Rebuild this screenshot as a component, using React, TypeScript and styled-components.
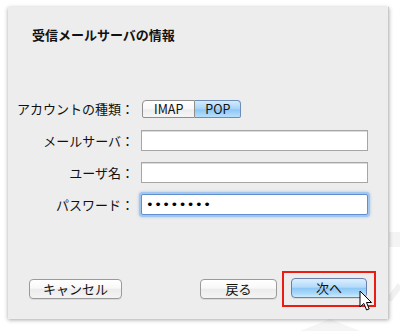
import React from 'react';
import styled, { createGlobalStyle } from 'styled-components';

const GlobalStyle = createGlobalStyle`
  html, body {
    margin: 0;
    padding: 0;
    background: #ffffff;
  }
  body {
    font-family: "Lucida Grande", "Noto Sans CJK JP", "Liberation Sans", sans-serif;
    color: #111;
    text-spacing-trim: space-all;
  }
`;

const Page = styled.div`
  position: relative;
  width: 400px;
  height: 331px;
  box-sizing: border-box;
  padding: 7px 11px 12px 8px;
  background: #ffffff;
  overflow: hidden;
`;

const Watermark = styled.svg`
  position: absolute;
  inset: 0;
  z-index: 0;
`;

const Panel = styled.div`
  position: relative;
  z-index: 1;
  height: 100%;
  display: flex;
  flex-direction: column;
  background: #ededed;
  border-right: 1px solid #c9c9c9;
  box-shadow: 0 1px 4px rgba(0, 0, 0, 0.35);
`;

const Title = styled.h1`
  margin: 19px 0 0 24px;
  font-size: 13px;
  line-height: 18px;
  font-weight: bold;
`;

const Form = styled.div`
  margin-top: 54px;
  display: grid;
  grid-template-columns: 126px 227px;
  grid-auto-rows: 21px;
  column-gap: 7px;
  row-gap: 11px;
  align-items: center;
`;

const Label = styled.label`
  text-align: right;
  font-size: 13px;
  line-height: 21px;
  white-space: nowrap;
  text-spacing-trim: space-all;
`;

const Segmented = styled.div`
  display: flex;
  height: 18px;
  margin-left: 1px;
  align-self: center;
`;

const Segment = styled.div<{ active?: boolean; first?: boolean }>`
  box-sizing: border-box;
  height: 18px;
  padding: 0 ${p => (p.first ? 11 : 10)}px;
  display: flex;
  align-items: center;
  font-size: 12.5px;
  color: #111;
  border: 1px solid ${p => (p.active ? '#6e8cb8' : '#8f8f8f')};
  border-left-width: ${p => (p.first ? 1 : 0)}px;
  border-radius: ${p => (p.first ? '4px 0 0 2px' : '0 4px 2px 0')};
  background: ${p =>
    p.active
      ? 'linear-gradient(#d3ebfd 0%, #a5d3f8 50%, #8cc6f5 55%, #b8e0fb 100%)'
      : 'linear-gradient(#ffffff 0%, #f8f8f8 50%, #ececec 55%, #f6f6f6 100%)'};
`;

const TextInput = styled.div<{ focused?: boolean }>`
  box-sizing: border-box;
  height: 21px;
  background: #fff;
  border: 1px solid ${p => (p.focused ? '#5f8fd0' : '#a6a6a6')};
  border-radius: ${p => (p.focused ? 2 : 0)}px;
  box-shadow: ${p => (p.focused ? '0 0 0 2px #a3c6ee, 0 0 3px 2px rgba(120, 165, 225, 0.6)' : 'inset 0 1px 0 #dcdcdc')};
  display: flex;
  align-items: center;
  padding-left: 4px;
`;

const Dots = styled.span`
  font-size: 13px;
  letter-spacing: 0.5px;
  font-family: "DejaVu Sans", sans-serif;
  line-height: 1;
  color: #000;
`;

const Footer = styled.div`
  margin-top: auto;
  display: flex;
  align-items: center;
  gap: 14px;
  padding: 0 21px 20px 21px;
`;

const Spacer = styled.div`
  flex: 1;
`;

const Highlight = styled.div`
  display: flex;
  margin: -9px -9px -9px -9px;
  padding: 5px 7px 7px 7px;
  border: 2px solid #ec1c12;
`;

const Button = styled.button<{ primary?: boolean; width: number }>`
  box-sizing: border-box;
  width: ${p => p.width}px;
  height: 20px;
  padding: 0;
  font-family: inherit;
  font-size: 13px;
  line-height: 18px;
  color: #111;
  border-radius: 4px;
  border: 1px solid ${p => (p.primary ? '#6a7fae' : '#9a9a9a')};
  background: ${p =>
    p.primary
      ? 'linear-gradient(#dcefff 0%, #b3dbfa 45%, #8ec8f6 52%, #a9d8fa 80%, #cdebfd 100%)'
      : 'linear-gradient(#ffffff 0%, #f8f8f8 45%, #ececec 52%, #f4f4f4 100%)'};
  box-shadow: 0 1px 0 rgba(0, 0, 0, 0.08);
`;

const Cursor = styled.svg`
  position: absolute;
  left: 359px;
  top: 290px;
  z-index: 2;
`;

export default function App() {
  return (
    <Page>
      <GlobalStyle />
      <Watermark width="400" height="331">
        <path d="M389 232 L400 232 L400 247 L389 247 Z" fill="#f4f4f4" />
        <path d="M389 300 L400 285" stroke="#f1f1f1" strokeWidth="6" />
        <path d="M300 331 L330 319 L360 331 Z" fill="#f5f5f5" />
      </Watermark>
      <Panel>
        <Title>受信メールサーバの情報</Title>
        <Form>
          <Label>アカウントの種類：</Label>
          <Segmented>
            <Segment first>IMAP</Segment>
            <Segment active>POP</Segment>
          </Segmented>
          <Label>メールサーバ：</Label>
          <TextInput />
          <Label>ユーザ名：</Label>
          <TextInput />
          <Label>パスワード：</Label>
          <TextInput focused>
            <Dots>••••••••</Dots>
          </TextInput>
        </Form>
        <Footer>
          <Button width={93}>キャンセル</Button>
          <Spacer />
          <Button width={77}>戻る</Button>
          <Highlight>
            <Button width={76} primary>次へ</Button>
          </Highlight>
        </Footer>
      </Panel>
      <Cursor width="14" height="22" viewBox="0 0 14 22">
        <path
          d="M1 1 L1 17 L4.8 13.4 L7.6 20 L10.2 18.9 L7.5 12.5 L12.5 12.5 Z"
          fill="#fff"
          stroke="#000"
          strokeWidth="1"
          strokeLinejoin="round"
        />
      </Cursor>
    </Page>
  );
}
